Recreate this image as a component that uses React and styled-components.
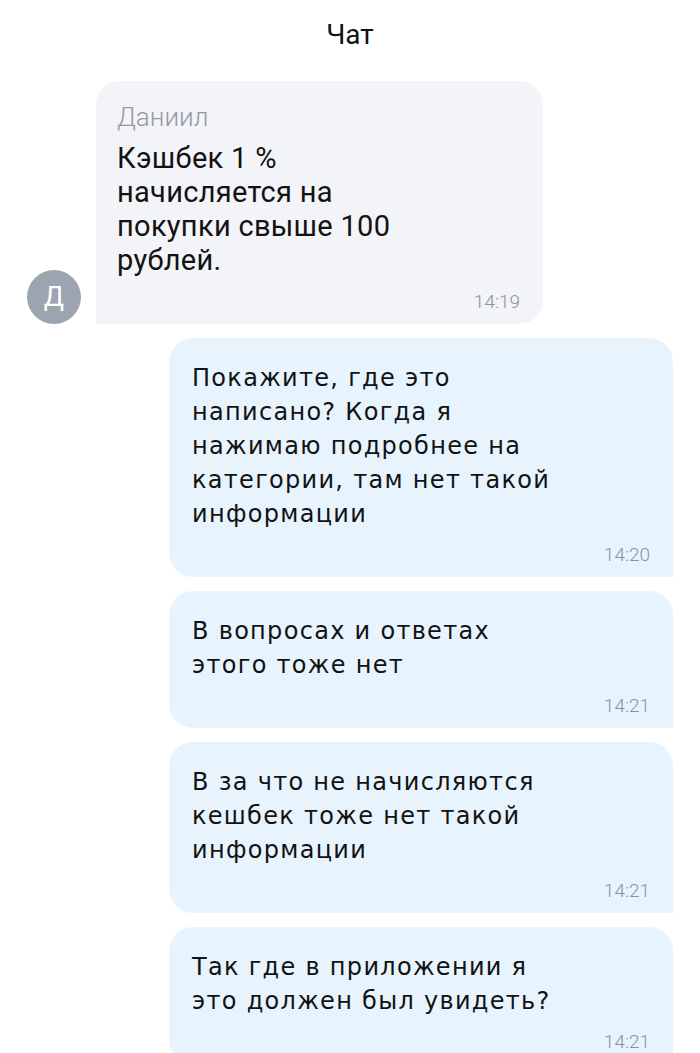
import React from "react";
import styled, { createGlobalStyle } from "styled-components";

const Global = createGlobalStyle`
  html, body { margin: 0; padding: 0; background: #ffffff; overflow: hidden; }
  body { font-family: Roboto, "Liberation Sans", sans-serif; }
`;

const Screen = styled.div`
  width: 700px;
  height: 1053px;
  overflow: hidden;
  background: #ffffff;
  display: flex;
  flex-direction: column;
`;

const Header = styled.header`
  flex: none;
  height: 70px;
  display: flex;
  align-items: center;
  justify-content: center;
  font-family: Roboto, sans-serif;
  font-size: 28px;
  color: #111111;
  padding-bottom: 2px;
  box-sizing: border-box;
`;

const Feed = styled.div`
  flex: none;
  display: flex;
  flex-direction: column;
  gap: 14px;
  padding: 11px 27px 0 27px;
`;

const IncomingRow = styled.div`
  display: flex;
  align-items: flex-end;
  gap: 15px;
`;

const Avatar = styled.div`
  width: 54px;
  height: 54px;
  flex: none;
  border-radius: 50%;
  background: #9ba4af;
  color: #ffffff;
  display: flex;
  align-items: center;
  justify-content: center;
  font-family: Roboto, sans-serif;
  font-size: 27px;
`;

const Bubble = styled.div`
  flex: none;
  box-sizing: border-box;
  width: ${(p) => p.$width}px;
  background: ${(p) => (p.$out ? "#e7f4fd" : "#f3f4f8")};
  border-radius: ${(p) => (p.$out ? "24px 24px 0 24px" : "24px 24px 24px 0")};
  padding: ${(p) => (p.$out ? "23px 23px 12px 23px" : "22px 23px 12px 21px")};
  display: flex;
  flex-direction: column;
  align-self: ${(p) => (p.$out ? "flex-end" : "auto")};
`;

const Author = styled.div`
  font-family: Roboto, sans-serif;
  font-weight: 300;
  font-size: 26px;
  line-height: 28px;
  color: #959aa2;
  margin-bottom: 10px;
`;

const Text = styled.div`
  white-space: pre-line;
  color: #121212;
  font-family: ${(p) => (p.$out ? '"DejaVu Sans", sans-serif' : "Roboto, sans-serif")};
  font-size: ${(p) => (p.$out ? "24px" : "29px")};
  letter-spacing: ${(p) => (p.$out ? "1.3px" : "0.3px")};
  line-height: 34px;
`;

const Time = styled.div`
  align-self: flex-end;
  font-family: Roboto, sans-serif;
  font-weight: 300;
  font-size: 19px;
  line-height: 20px;
  color: #8d9299;
  margin-top: ${(p) => (p.$out ? "14px" : "15px")};
`;

const messages = [
  {
    text: "Покажите, где это\nнаписано? Когда я\nнажимаю подробнее на\nкатегории, там нет такой\nинформации",
    time: "14:20",
  },
  { text: "В вопросах и ответах\nэтого тоже нет", time: "14:21" },
  {
    text: "В за что не начисляются\nкешбек тоже нет такой\nинформации",
    time: "14:21",
  },
  { text: "Так где в приложении я\nэто должен был увидеть?", time: "14:21" },
];

export default function App() {
  return (
    <Screen>
      <Global />
      <Header>Чат</Header>
      <Feed>
        <IncomingRow>
          <Avatar>Д</Avatar>
          <Bubble $width={447}>
            <Author>Даниил</Author>
            <Text>{"Кэшбек 1 %\nначисляется на\nпокупки свыше 100\nрублей."}</Text>
            <Time>14:19</Time>
          </Bubble>
        </IncomingRow>
        {messages.map((m, i) => (
          <Bubble key={i} $out $width={504}>
            <Text $out>{m.text}</Text>
            <Time $out>{m.time}</Time>
          </Bubble>
        ))}
      </Feed>
    </Screen>
  );
}
